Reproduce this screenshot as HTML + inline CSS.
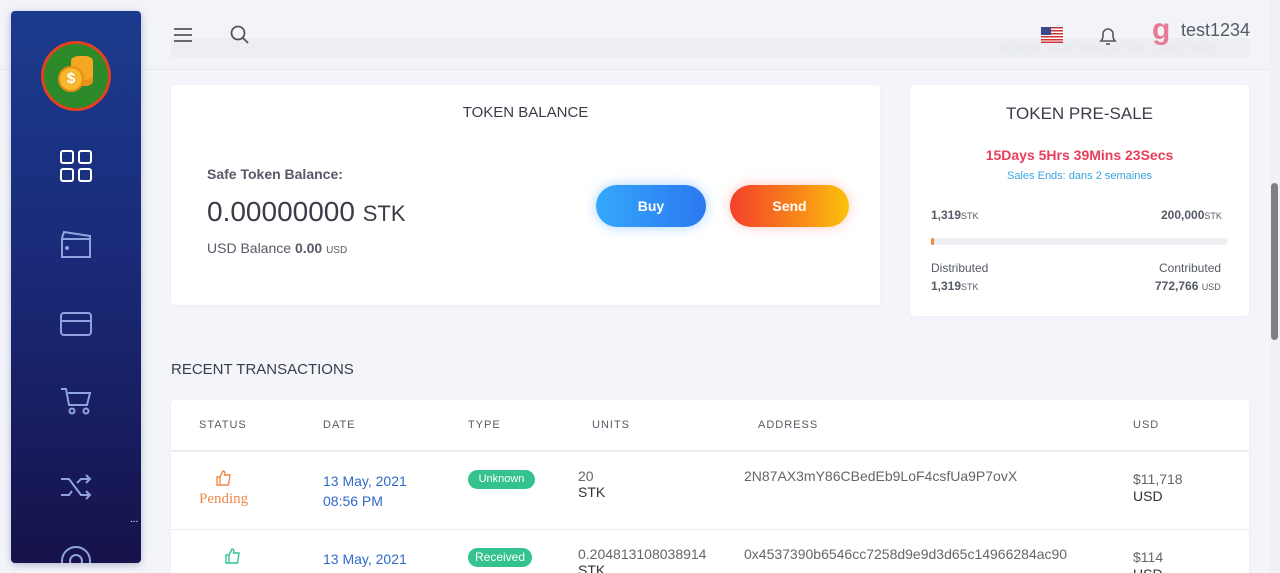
<!DOCTYPE html>
<html><head><meta charset="utf-8"><style>
*{box-sizing:border-box;margin:0;padding:0}
html,body{width:1280px;height:573px;overflow:hidden}
body{background:#f4f5fa;font-family:"Liberation Sans",sans-serif;color:#4a4d57}
#w{position:relative;width:1280px;height:573px;overflow:hidden}
.abs{position:absolute}
.sb{left:11px;top:11px;width:130px;height:552px;border-radius:4px;background:linear-gradient(#1b3b8e,#1a2a78 45%,#16124a);box-shadow:0 2px 8px rgba(30,40,120,.3)}
.card{background:#fff;border-radius:4px;box-shadow:0 1px 4px rgba(0,0,0,.04)}
.th{position:absolute;top:419px;font-size:11px;letter-spacing:1px;color:#555a66}
</style></head><body><div id="w">
<div class="abs" style="left:0;top:0;width:1270px;height:70px;background:#f3f4f8;border-bottom:1px solid #e8e9ef"></div>
<div class="abs" style="left:171px;top:38px;width:1078px;height:20px;background:#eceef3;border-radius:0 0 4px 4px"></div>
<div class="abs" style="left:998px;top:41px;font-size:12px;color:#e6e8ee">Binance Smart Pool by Safe Chain Token</div>
<div class="abs" style="left:1270px;top:0;width:10px;height:573px;background:#f0f1f4"></div>
<div class="abs" style="left:1271px;top:183px;width:7px;height:157px;background:#7d7f85;border-radius:4px"></div>

<svg class="abs" style="left:173px;top:27px" width="20" height="16"><path d="M1 2h18M1 8h18M1 14h18" stroke="#555" stroke-width="1.8"/></svg>
<svg class="abs" style="left:230px;top:25px" width="20" height="20"><circle cx="8" cy="8" r="6.5" fill="none" stroke="#555" stroke-width="1.8"/><path d="M13 13l5 5" stroke="#555" stroke-width="1.8"/></svg>
<svg class="abs" style="left:1041px;top:27px" width="22" height="16"><rect width="22" height="16" fill="#fff"/><g fill="#c33"><rect y="0" width="22" height="1.5"/><rect y="3" width="22" height="1.5"/><rect y="6" width="22" height="1.5"/><rect y="9" width="22" height="1.5"/><rect y="12" width="22" height="1.5"/><rect y="14.5" width="22" height="1.5"/></g><rect width="10" height="8" fill="#3b4a8a"/></svg>
<svg class="abs" style="left:1097px;top:25px" width="22" height="22"><path d="M4 16c2-2 2-4 2-7a5 5 0 0110 0c0 3 0 5 2 7z" fill="none" stroke="#555" stroke-width="1.6"/><path d="M9 19h4" stroke="#555" stroke-width="1.6"/></svg>
<div class="abs" style="left:1152px;top:19px;width:20px;height:26px;color:#e87a97;font-size:30px;font-weight:bold;line-height:22px">g</div>
<div class="abs" style="left:1181px;top:20px;font-size:18px;color:#555a66">test1234</div>

<div class="abs sb"></div>
<div class="abs" style="left:41px;top:41px;width:70px;height:70px;border-radius:50%;background:#e2421f;padding:3px"><div style="width:64px;height:64px;border-radius:50%;background:#2d8a2a;position:relative">
<div style="position:absolute;left:27px;top:12px;width:22px;height:30px;background:#f5a623;border-radius:8px/5px;box-shadow:inset 0 -6px 0 #e8911a"></div>
<div style="position:absolute;left:14px;top:22px;width:26px;height:26px;border-radius:50%;background:#f7b731;border:2px solid #e98f10;color:#fff;font-weight:bold;font-size:15px;text-align:center;line-height:22px">$</div></div></div>
<svg class="abs" style="left:60px;top:150px" width="32" height="32" fill="none" stroke="#fff" stroke-width="2"><rect x="1" y="1" width="12" height="12" rx="2"/><rect x="19" y="1" width="12" height="12" rx="2"/><rect x="1" y="19" width="12" height="12" rx="2"/><rect x="19" y="19" width="12" height="12" rx="2"/></svg>
<svg class="abs" style="left:60px;top:230px" width="32" height="30" fill="none" stroke="#8fa3e0" stroke-width="2"><path d="M2 8l2-6 26 4v4M2 9h28v18H2z"/><circle cx="7" cy="18" r="1" fill="#8fa3e0"/></svg>
<svg class="abs" style="left:60px;top:311px" width="32" height="26" fill="none" stroke="#8fa3e0" stroke-width="2"><rect x="1" y="2" width="30" height="22" rx="3"/><path d="M1 10h30"/></svg>
<svg class="abs" style="left:60px;top:387px" width="32" height="32" fill="none" stroke="#8fa3e0" stroke-width="2"><path d="M1 2h5l3 16h18l3-12H8"/><circle cx="12" cy="24" r="2.5"/><circle cx="26" cy="24" r="2.5"/></svg>
<svg class="abs" style="left:60px;top:471px" width="32" height="30" fill="none" stroke="#8fa3e0" stroke-width="2"><path d="M1 8h8l12 16h9M1 24h8l3-4M17 12l4-4h9M26 4l4 4-4 4M26 20l4 4-4 4"/></svg>
<svg class="abs" style="left:60px;top:545px" width="32" height="18" fill="none" stroke="#8fa3e0" stroke-width="2"><circle cx="16" cy="16" r="14"/><circle cx="16" cy="16" r="6"/></svg>
<div class="abs" style="left:130px;top:514px;color:#fff;font-size:10px">...</div>

<div class="abs card" style="left:171px;top:85px;width:709px;height:220px"></div>
<div class="abs" style="left:171px;top:104px;width:709px;text-align:center;font-size:15px;color:#3a3d47">TOKEN BALANCE</div>
<div class="abs" style="left:207px;top:166px;font-size:14px;font-weight:bold;color:#555a66">Safe Token Balance:</div>
<div class="abs" style="left:207px;top:196px;font-size:28px;color:#3a3d47">0.00000000 <span style="font-size:22px">STK</span></div>
<div class="abs" style="left:207px;top:240px;font-size:14px;color:#555a66">USD Balance <b>0.00</b> <span style="font-size:10px">USD</span></div>
<div class="abs" style="left:596px;top:185px;width:110px;height:42px;border-radius:21px;background:linear-gradient(90deg,#35a8fb,#2a78f0);box-shadow:0 0 12px rgba(60,160,255,.45);color:#fff;font-weight:bold;font-size:14px;text-align:center;line-height:42px">Buy</div>
<div class="abs" style="left:730px;top:185px;width:119px;height:42px;border-radius:21px;background:linear-gradient(90deg,#f3402a,#f98a18 60%,#fbc20a);box-shadow:0 0 12px rgba(250,100,80,.35);color:#fff;font-weight:bold;font-size:14px;text-align:center;line-height:42px">Send</div>

<div class="abs card" style="left:910px;top:85px;width:339px;height:231px"></div>
<div class="abs" style="left:910px;top:104px;width:339px;text-align:center;font-size:17px;color:#3a3d47">TOKEN PRE-SALE</div>
<div class="abs" style="left:910px;top:147px;width:339px;text-align:center;font-size:14px;font-weight:bold;color:#ea3d5c">15Days 5Hrs 39Mins 23Secs</div>
<div class="abs" style="left:910px;top:170px;width:339px;text-align:center;font-size:11px;color:#3da3e0">Sales Ends: dans 2 semaines</div>
<div class="abs" style="left:931px;top:208px;font-size:12px;font-weight:bold;color:#555a66">1,319<span style="font-size:9px;font-weight:normal">STK</span></div>
<div class="abs" style="left:1161px;top:208px;font-size:12px;font-weight:bold;color:#555a66">200,000<span style="font-size:9px;font-weight:normal">STK</span></div>
<div class="abs" style="left:931px;top:238px;width:297px;height:7px;border-radius:4px;background:#eeeff2"><div style="width:3px;height:7px;background:#f08a3a;border-radius:3px"></div></div>
<div class="abs" style="left:931px;top:261px;font-size:12px;color:#555a66">Distributed</div>
<div class="abs" style="left:1159px;top:261px;font-size:12px;color:#555a66">Contributed</div>
<div class="abs" style="left:931px;top:279px;font-size:12px;font-weight:bold;color:#555a66">1,319<span style="font-size:9px;font-weight:normal">STK</span></div>
<div class="abs" style="left:1155px;top:279px;font-size:12px;font-weight:bold;color:#555a66">772,766 <span style="font-size:9px;font-weight:normal">USD</span></div>

<div class="abs" style="left:171px;top:361px;font-size:15px;color:#3a3d47">RECENT TRANSACTIONS</div>

<div class="abs card" style="left:171px;top:400px;width:1078px;height:173px;border-radius:4px 4px 0 0"></div>
<div class="abs" style="left:171px;top:450px;width:1078px;height:2px;background:#e9ecf0"></div>
<div class="abs" style="left:171px;top:529px;width:1078px;height:1px;background:#e9ecf0"></div>
<div class="th" style="left:199px">STATUS</div><div class="th" style="left:323px">DATE</div><div class="th" style="left:468px">TYPE</div><div class="th" style="left:592px">UNITS</div><div class="th" style="left:758px">ADDRESS</div><div class="th" style="left:1133px">USD</div>

<svg class="abs" style="left:216px;top:470px" width="16" height="16" fill="none" stroke="#ef8a4a" stroke-width="1.4"><path d="M1 7h3v8H1zM4 7l3-6c2 0 2 2 1.5 4H14l-1.5 10H4"/></svg>
<div class="abs" style="left:199px;top:491px;font-family:'Liberation Serif',serif;font-size:15px;color:#ef8a4a">Pending</div>
<div class="abs" style="left:323px;top:471px;font-size:14px;color:#2f6ac9;line-height:20px">13 May, 2021<br>08:56 PM</div>
<div class="abs" style="left:468px;top:470px;width:67px;height:19px;border-radius:10px;background:#34c38f;color:#fff;font-size:11px;text-align:center;line-height:19px">Unknown</div>
<div class="abs" style="left:578px;top:468px;font-size:14px;color:#666;line-height:16px">20<br><span style="color:#333">STK</span></div>
<div class="abs" style="left:744px;top:468px;font-size:14px;color:#666">2N87AX3mY86CBedEb9LoF4csfUa9P7ovX</div>
<div class="abs" style="left:1133px;top:471px;font-size:14px;color:#666;line-height:17px">$11,718<br><span style="color:#333">USD</span></div>

<svg class="abs" style="left:225px;top:548px" width="16" height="16" fill="none" stroke="#34c38f" stroke-width="1.4"><path d="M1 7h3v8H1zM4 7l3-6c2 0 2 2 1.5 4H14l-1.5 10H4"/></svg>
<div class="abs" style="left:323px;top:549px;font-size:14px;color:#2f6ac9;line-height:20px">13 May, 2021<br>08:30 PM</div>
<div class="abs" style="left:468px;top:548px;width:64px;height:19px;border-radius:10px;background:#34c38f;color:#fff;font-size:12px;text-align:center;line-height:19px">Received</div>
<div class="abs" style="left:578px;top:546px;font-size:14px;color:#666;line-height:16px">0.204813108038914<br><span style="color:#333">STK</span></div>
<div class="abs" style="left:744px;top:546px;font-size:14px;color:#666">0x4537390b6546cc7258d9e9d3d65c14966284ac90</div>
<div class="abs" style="left:1133px;top:549px;font-size:14px;color:#666;line-height:17px">$114<br><span style="color:#333">USD</span></div>
</div></body></html>
